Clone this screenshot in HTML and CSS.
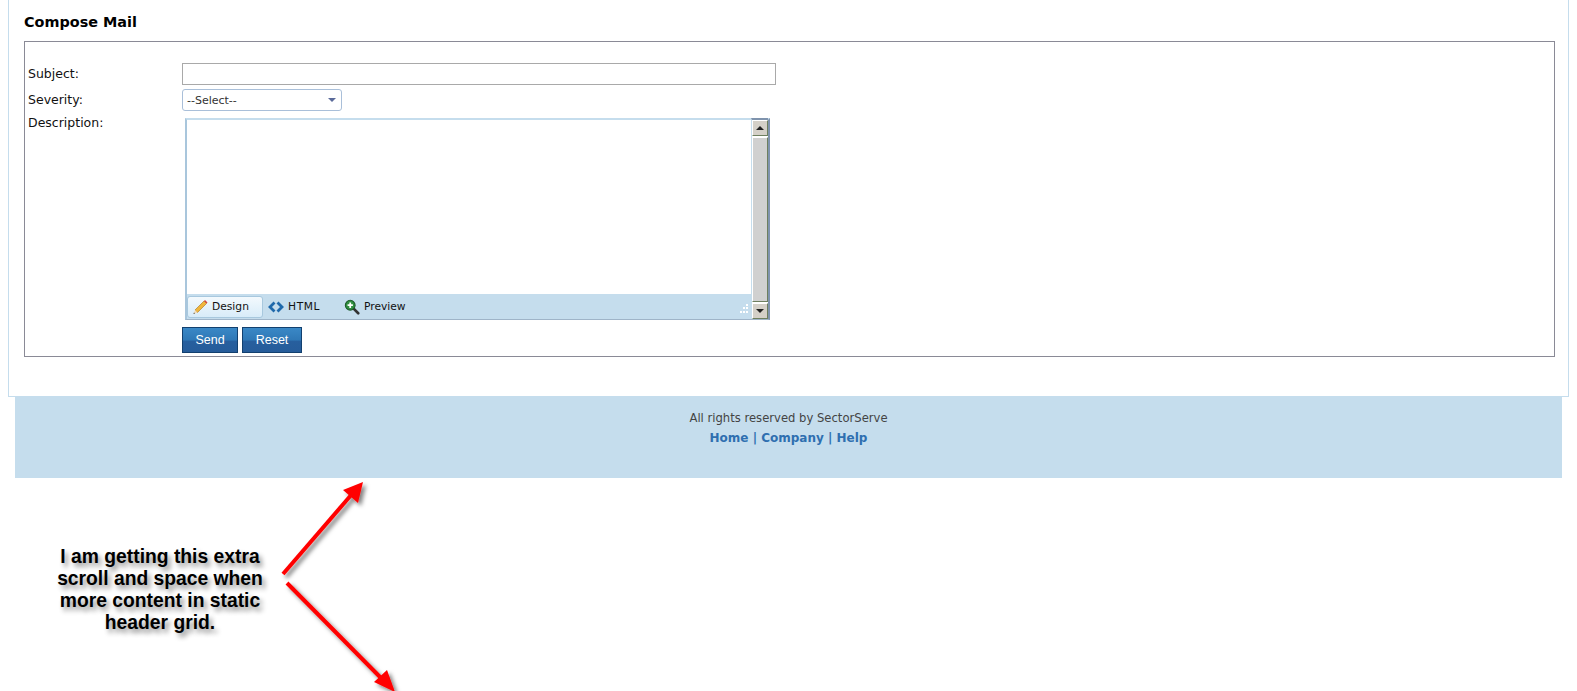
FILE: index.html
```html
<!DOCTYPE html>
<html lang="en">
<head>
    <meta charset="UTF-8">
    <meta name="viewport" content="width=device-width, initial-scale=1.0">
    <title>Compose Mail</title>
    <link rel="stylesheet" href="styles.css">
</head>
<body>
    <div class="panel">
        <h2 class="title">Compose Mail</h2>
        <div class="compose-box">
            <div class="form-row row-subject">
                <label class="label">Subject:</label>
                <input type="text" class="text-input">
            </div>
            <div class="form-row row-severity">
                <label class="label">Severity:</label>
                <div class="select-box">
                    <span>--Select--</span>
                    <span class="select-arrow"></span>
                </div>
            </div>
            <div class="form-row row-description">
                <label class="label">Description:</label>
                <div class="editor">
                    <div class="editor-main">
                        <div class="editor-area"></div>
                        <div class="editor-tabs">
                            <div class="tab tab-active">
                                <svg class="tab-icon" width="16" height="16" viewBox="0 0 16 16">
                                    <path d="M3 11 L12 2 L14.5 4.5 L5.5 13.5 Z" fill="#f0b63c" stroke="#a8741e" stroke-width="0.6"/>
                                    <path d="M12 2 L13 1 L15.5 3.5 L14.5 4.5 Z" fill="#d8443c"/>
                                    <path d="M3 11 L1.5 15 L5.5 13.5 Z" fill="#f3dcb4"/>
                                    <path d="M2 13.6 L1.5 15 L2.9 14.5 Z" fill="#222"/>
                                </svg>
                                <span>Design</span>
                            </div>
                            <div class="tab tab-html">
                                <svg class="tab-icon" width="16" height="12" viewBox="0 0 16 12">
                                    <path d="M6.5 1.5 L2 6 L6.5 10.5" fill="none" stroke="#1f69ab" stroke-width="2.8"/>
                                    <path d="M9.5 1.5 L14 6 L9.5 10.5" fill="none" stroke="#1f69ab" stroke-width="2.8"/>
                                </svg>
                                <span class="html-label">HTML</span>
                            </div>
                            <div class="tab tab-preview">
                                <svg class="tab-icon" width="16" height="16" viewBox="0 0 18 18">
                                    <path d="M10 10 L16 16" stroke="#333" stroke-width="3" stroke-linecap="round"/>
                                    <circle cx="7" cy="7" r="5.5" fill="#2f8f3f" stroke="#1d5a2a" stroke-width="1.2"/>
                                    <path d="M7 4 V10 M4 7 H10" stroke="#fff" stroke-width="2"/>
                                </svg>
                                <span>Preview</span>
                            </div>
                            <div class="grip">
                                <svg width="12" height="12" viewBox="0 0 12 12" fill="#fff">
                                    <rect x="9" y="1" width="2" height="2"/>
                                    <rect x="6" y="4" width="2" height="2"/>
                                    <rect x="9" y="4" width="2" height="2"/>
                                    <rect x="3" y="8" width="2" height="2"/>
                                    <rect x="6" y="8" width="2" height="2"/>
                                    <rect x="9" y="8" width="2" height="2"/>
                                </svg>
                            </div>
                        </div>
                    </div>
                    <div class="scrollbar">
                        <div class="scroll-btn"><span class="tri-up"></span></div>
                        <div class="scroll-thumb"></div>
                        <div class="scroll-btn"><span class="tri-down"></span></div>
                    </div>
                </div>
            </div>
            <div class="form-row row-buttons">
                <span></span>
                <div class="buttons">
                    <button class="btn btn-send">Send</button>
                    <button class="btn btn-reset">Reset</button>
                </div>
            </div>
        </div>
    </div>

    <div class="footer">
        <div class="footer-text">All rights reserved by SectorServe</div>
        <div class="footer-links"><a href="#">Home</a> | <a href="#">Company</a> | <a href="#">Help</a></div>
    </div>

    <!-- annotation on top of the screenshot -->
    <div class="note">
        <p class="note-text">I am getting this extra<br>scroll and space when<br>more content in static<br>header grid.</p>
        <svg class="note-arrows" width="500" height="214" viewBox="0 0 500 214">
            <defs>
                <filter id="arrowShadow" x="-30%" y="-30%" width="160%" height="160%">
                    <feDropShadow dx="3" dy="3" stdDeviation="2.2" flood-color="#000" flood-opacity="0.5"/>
                </filter>
            </defs>
            <g filter="url(#arrowShadow)">
                <path d="M283 96 L352 16" stroke="#f00" stroke-width="4" fill="none"/>
                <path d="M363 4 L343 12 L358 25 Z" fill="#f00"/>
                <path d="M287 105 L382 201" stroke="#f00" stroke-width="4" fill="none"/>
                <path d="M395 214 L374 204 L387 192 Z" fill="#f00"/>
            </g>
        </svg>
    </div>
</body>
</html>
```

FILE: styles.css
```css
html, body {
    margin: 0;
    padding: 0;
    height: 691px;
    overflow: hidden;
    background: #fff;
}

body {
    font-family: "DejaVu Sans", Verdana, sans-serif;
    font-size: 11px;
    color: #111;
}

.panel {
    margin-left: 8px;
    width: 1531px;
    height: 396px;
    padding: 0 13px 0 15px;
    border: solid #c5dded;
    border-width: 0 1px 1px 1px;
}

.title {
    margin: 0;
    padding-top: 14px;
    height: 41px;
    box-sizing: border-box;
    font-size: 14.4px;
    line-height: 17px;
    font-weight: bold;
    color: #000;
}

.compose-box {
    height: 316px;
    box-sizing: border-box;
    border: 1px solid #8a8a96;
    padding: 21px 0 0 3px;
}

.form-row {
    display: grid;
    grid-template-columns: 154px 1fr;
}

.label {
    font-size: 12.5px;
    line-height: 22px;
}

.row-subject {
    height: 26px;
}

.row-severity {
    height: 29px;
}

.row-description {
    height: 209px;
}

.row-description .label {
    line-height: 10px;
}

.text-input {
    width: 594px;
    height: 22px;
    box-sizing: border-box;
    border: 1px solid #a9a9a9;
    padding: 0;
    margin: 0;
    outline: none;
}

.select-box {
    display: flex;
    justify-content: space-between;
    align-items: center;
    width: 160px;
    height: 22px;
    box-sizing: border-box;
    border: 1px solid #a9bfd9;
    border-radius: 3px;
    padding: 0 5px 0 4px;
    font-size: 11px;
    color: #333;
}

.select-arrow {
    width: 0;
    height: 0;
    border-left: 4px solid transparent;
    border-right: 4px solid transparent;
    border-top: 4px solid #5a6a9a;
}

.editor {
    display: flex;
    width: 585px;
    height: 202px;
    margin-left: 3px;
    box-sizing: border-box;
    border-top: 2px solid #c5dded;
    border-left: 2px solid #a9c6dc;
    border-right: 2px solid #7f93ad;
    border-bottom: 1px solid #9fb4c8;
}

.editor-main {
    flex: 1;
    display: flex;
    flex-direction: column;
}

.editor-area {
    flex: 1;
    background: #fff;
}

.editor-tabs {
    display: flex;
    align-items: center;
    height: 25px;
    background: #c5dded;
    font-size: 10.7px;
    color: #111;
}

.tab {
    display: flex;
    align-items: center;
    gap: 4px;
}

.tab-active {
    width: 76px;
    height: 22px;
    box-sizing: border-box;
    padding-left: 4px;
    background: linear-gradient(#f3f9fd, #d8ecf9);
    border: 1px solid #a8c8de;
    border-radius: 3px;
}

.tab-html {
    width: 56px;
    margin-left: 5px;
}

.html-label {
    letter-spacing: 0.6px;
}

.tab-preview {
    margin-left: 20px;
}

.grip {
    margin-left: auto;
    margin-right: 2px;
    margin-top: 4px;
    height: 12px;
}

.scrollbar {
    width: 16px;
    margin-top: -2px;
    display: flex;
    flex-direction: column;
    gap: 1px;
    border-top: 2px solid #7f93ad;
    border-left: 1px solid #c5dded;
}

.scroll-btn {
    height: 16px;
    flex: none;
    display: flex;
    align-items: center;
    justify-content: center;
    box-sizing: border-box;
    background: #d4d0c8;
    border: 1px solid;
    border-color: #fff #6d7f5f #6d7f5f #fff;
}

.scroll-thumb {
    flex: 1;
    box-sizing: border-box;
    background: #d0d0d0;
    border: 1px solid;
    border-color: #fff #6d7f5f #6d7f5f #fff;
}

.tri-up, .tri-down {
    width: 0;
    height: 0;
    border-left: 4px solid transparent;
    border-right: 4px solid transparent;
}

.tri-up {
    border-bottom: 4px solid #222;
}

.tri-down {
    border-top: 4px solid #222;
}

.row-buttons {
    height: 26px;
}

.buttons {
    display: flex;
    gap: 4px;
}

.btn {
    height: 26px;
    padding: 0;
    border: 1px solid #12406f;
    background: linear-gradient(#3a88c6 0%, #2f78b6 50%, #275f9e 55%, #265c9a 100%);
    color: #fff;
    font-family: "Liberation Sans", Arial, sans-serif;
    font-size: 12.5px;
}

.btn-send {
    width: 56px;
}

.btn-reset {
    width: 60px;
}

.footer {
    margin: -1px 0 0 15px;
    position: relative;
    width: 1547px;
    height: 82px;
    background: #c5dded;
    text-align: center;
    box-sizing: border-box;
    padding-top: 14px;
    color: #444;
}

.footer-text {
    font-size: 11.6px;
    line-height: 16px;
}

.footer-links {
    margin-top: 4px;
    font-size: 12px;
    line-height: 16px;
    font-weight: bold;
    color: #2f6fb0;
}

.footer-links a {
    color: #2f6fb0;
    text-decoration: none;
}

.note {
    position: relative;
    height: 214px;
    overflow: hidden;
}

.note-text {
    margin: 0;
    padding-top: 68px;
    width: 320px;
    text-align: center;
    font-family: "Liberation Sans", Arial, sans-serif;
    font-size: 19.3px;
    font-weight: bold;
    line-height: 22px;
    color: #000;
    text-shadow: 3px 4px 5px rgba(0, 0, 0, 0.45);
}

.note-arrows {
    position: absolute;
    left: 0;
    top: 0;
}
```
